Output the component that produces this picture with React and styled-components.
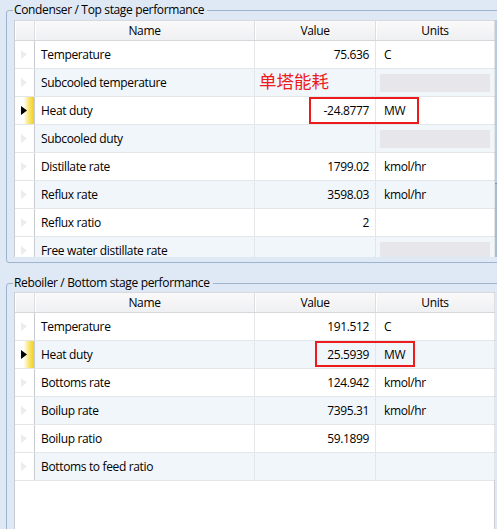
import React from 'react'
import styled, { createGlobalStyle } from 'styled-components'

const GlobalStyle = createGlobalStyle`
  html, body {
    margin: 0;
    padding: 0;
    background: #dfe9f5;
  }
  body {
    font-family: "Open Sans", "Noto Sans", "Noto Sans CJK SC", sans-serif;
    font-size: 12px;
    letter-spacing: -0.35px;
    color: #000;
  }
`

const colors = {
  page: '#dfe9f5',
  groupLine: '#9fb4cf',
  gridLine: '#e4e6e9',
  gridEdge: '#c9cdd2',
  stripe: '#f1f6fb',
  disabled: '#e6e6eb',
  red: '#ec1c1c',
}

const COLS = '20px 220px 121px 119px'

// Layout

const Page = styled.div`
  width: 520px;
  height: 529px;
  overflow: hidden;
  padding: 2px 0 0 6px;
  box-sizing: border-box;
  display: flex;
  flex-direction: column;
  gap: 12px;
`

const Group = styled.fieldset`
  margin: 0;
  width: 510px;
  box-sizing: border-box;
  border: 1px solid ${colors.groupLine};
  border-radius: 3px;
  padding: ${p => p.padTop}px 0 ${p => p.padBottom}px 7px;
  min-width: 0;
  ${p => p.grow && 'flex: 1;'}
`

const Legend = styled.legend`
  padding: 0 3px 0 1px;
  margin-left: -1px;
  line-height: 16px;
  font-size: 12px;
  white-space: nowrap;
`

const GridWrap = styled.div`
  position: relative;
  display: flex;
  height: ${p => p.height}px;
  overflow: hidden;
`

const Grid = styled.div`
  width: 481px;
  background: #fff;
  border-left: 1px solid ${colors.gridEdge};
  border-right: 1px solid ${colors.gridEdge};
  box-sizing: border-box;
  flex: none;
`

const HeaderRow = styled.div`
  display: grid;
  grid-template-columns: ${COLS};
  height: 21px;
  background: linear-gradient(#f9f9fa, #eff0f2);
  border-top: 1px solid #d8dadd;
  border-bottom: 1px solid #d5d7da;
  box-sizing: border-box;
`

const HeaderCell = styled.div`
  display: flex;
  align-items: center;
  justify-content: center;
  border-right: 1px solid #dcdee1;
  box-shadow: inset 1px 0 0 #fff;
  line-height: 1;
`

const Row = styled.div`
  display: grid;
  grid-template-columns: ${COLS};
  height: 28px;
  box-sizing: border-box;
  border-bottom: 1px solid ${colors.gridLine};
  background: ${p => (p.striped ? colors.stripe : '#fff')};
`

const RowHead = styled.div`
  display: flex;
  align-items: center;
  padding-left: 6px;
  background: ${p =>
    p.selected
      ? 'linear-gradient(90deg, #fff 0%, #fff 45%, #f8e46a 75%, #f3cf1e 100%)'
      : '#fff'};
  border-right: 1px solid #c7cacf;
`

const Cell = styled.div`
  display: flex;
  align-items: center;
  justify-content: ${p => (p.right ? 'flex-end' : 'flex-start')};
  padding: ${p => (p.right ? '0 6px 0 0' : p.units ? '0 0 0 8px' : '0 0 0 6px')};
  border-right: 1px solid ${colors.gridLine};
  white-space: nowrap;
  overflow: hidden;
`

const DisabledBox = styled.div`
  flex: 1;
  height: 18px;
  margin: 0 4px 0 -4px;
  background: ${colors.disabled};
`

const Scrollbar = styled.div`
  width: 17px;
  flex: none;
  background: #a9bdd9;
  display: flex;
  flex-direction: column;
`

const Thumb = styled.div`
  height: 163px;
  background: linear-gradient(90deg, #b7cbe6, #c9d9ee);
  border-bottom: 1px solid #7a92b8;
`

// Overlays (annotations drawn on top of the grid)

const Note = styled.div`
  position: absolute;
  left: 245px;
  top: 50px;
  font-family: "Noto Sans CJK SC", sans-serif;
  font-size: 17.5px;
  letter-spacing: 0;
  line-height: 22px;
  color: ${colors.red};
`

const Highlight = styled.div`
  position: absolute;
  border: 2px solid ${colors.red};
  box-sizing: border-box;
  pointer-events: none;
`

const Arrow = ({ active }) => (
  <svg width="6" height="9" viewBox="0 0 6 9">
    <path d="M0 0 L6 4.5 L0 9 Z" fill={active ? '#000' : '#ececec'} />
  </svg>
)

const topRows = [
  { name: 'Temperature', value: '75.636', units: 'C' },
  { name: 'Subcooled temperature', value: '', disabled: true },
  { name: 'Heat duty', value: '-24.8777', units: 'MW', selected: true },
  { name: 'Subcooled duty', value: '', disabled: true },
  { name: 'Distillate rate', value: '1799.02', units: 'kmol/hr' },
  { name: 'Reflux rate', value: '3598.03', units: 'kmol/hr' },
  { name: 'Reflux ratio', value: '2', units: '' },
  { name: 'Free water distillate rate', value: '', disabled: true },
]

const bottomRows = [
  { name: 'Temperature', value: '191.512', units: 'C' },
  { name: 'Heat duty', value: '25.5939', units: 'MW', selected: true },
  { name: 'Bottoms rate', value: '124.942', units: 'kmol/hr' },
  { name: 'Boilup rate', value: '7395.31', units: 'kmol/hr' },
  { name: 'Boilup ratio', value: '59.1899', units: '' },
  { name: 'Bottoms to feed ratio', value: '', units: '' },
]

const PropertyGrid = ({ rows }) => (
  <Grid>
    <HeaderRow>
      <HeaderCell />
      <HeaderCell>Name</HeaderCell>
      <HeaderCell>Value</HeaderCell>
      <HeaderCell>Units</HeaderCell>
    </HeaderRow>
    {rows.map((r, i) => (
      <Row key={r.name} striped={i % 2 === 1}>
        <RowHead selected={r.selected}>
          <Arrow active={r.selected} />
        </RowHead>
        <Cell>{r.name}</Cell>
        <Cell right>{r.value}</Cell>
        <Cell units>{r.disabled ? <DisabledBox /> : r.units}</Cell>
      </Row>
    ))}
  </Grid>
)

export default function App() {
  return (
    <>
      <GlobalStyle />
      <Page>
        <Group padTop={2} padBottom={5}>
          <Legend>Condenser / Top stage performance</Legend>
          <GridWrap height={237}>
            <PropertyGrid rows={topRows} />
            <Scrollbar>
              <Thumb />
            </Scrollbar>
            <Note>单塔能耗</Note>
            <Highlight style={{ left: 295, top: 77, width: 110, height: 27 }} />
          </GridWrap>
        </Group>
        <Group padTop={1} padBottom={0} grow>
          <Legend>Reboiler / Bottom stage performance</Legend>
          <GridWrap height={260}>
            <PropertyGrid rows={bottomRows} />
            <Highlight style={{ left: 301, top: 49, width: 100, height: 26 }} />
          </GridWrap>
        </Group>
      </Page>
    </>
  )
}
